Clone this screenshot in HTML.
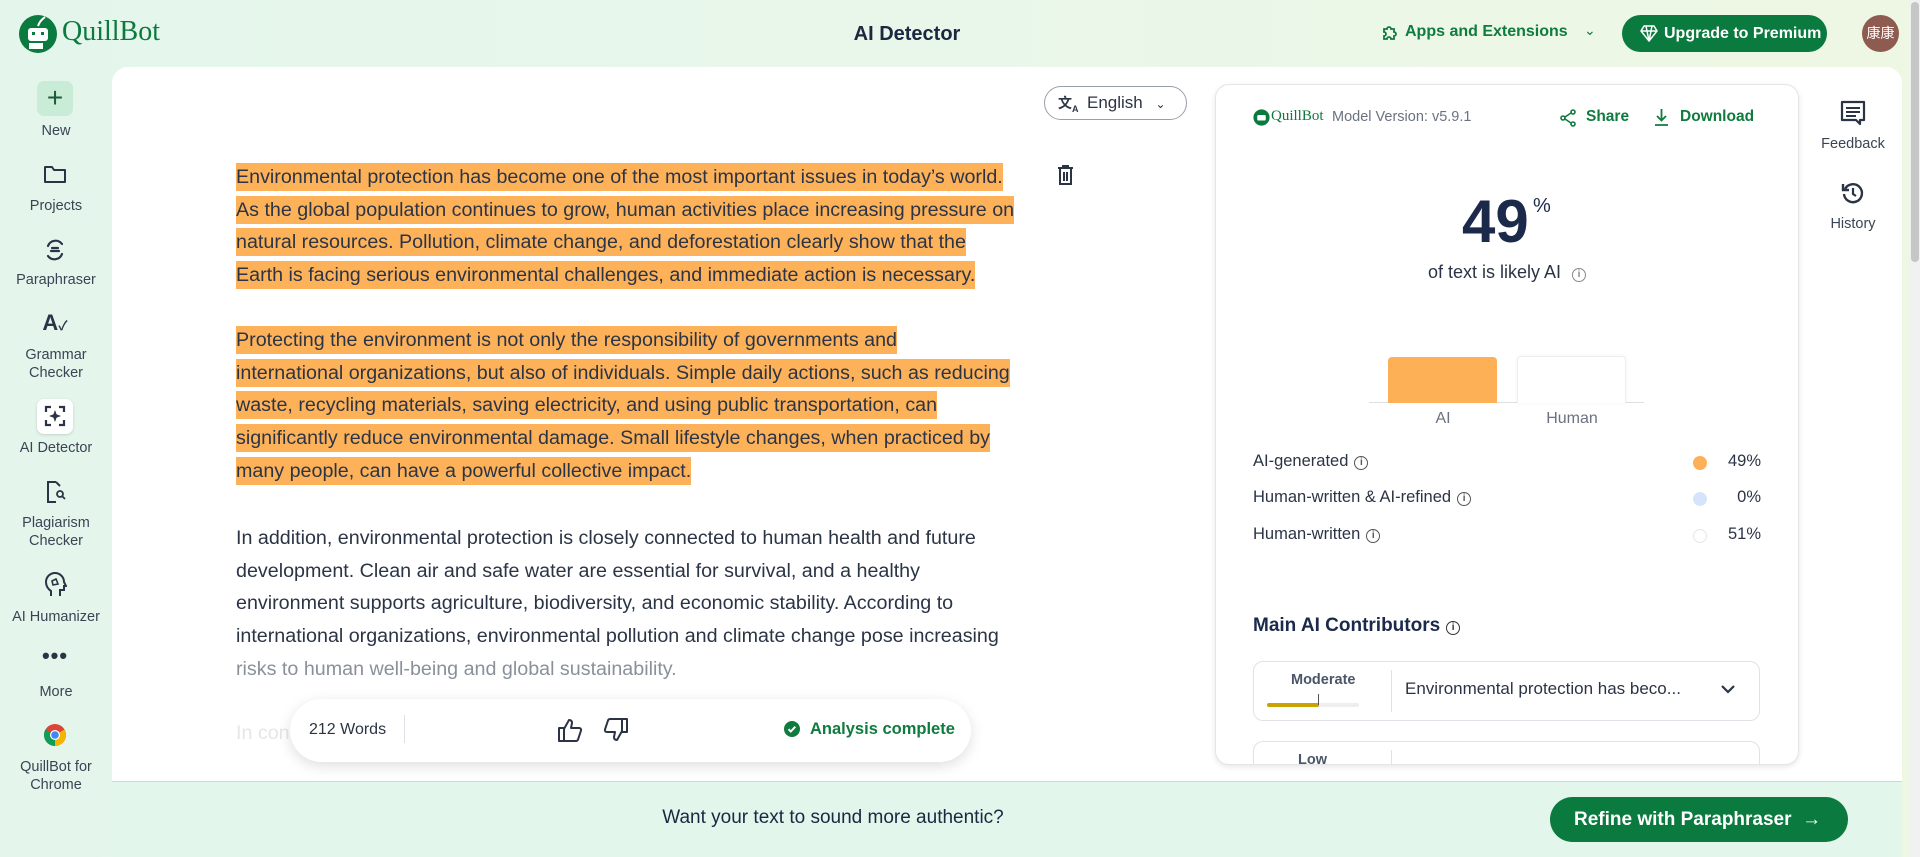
<!DOCTYPE html>
<html><head><meta charset="utf-8"><style>
*{box-sizing:border-box;margin:0;padding:0}
body{width:1920px;height:857px;overflow:hidden;font-family:"Liberation Sans","Noto Sans CJK SC",sans-serif;background:linear-gradient(90deg,#e4f6ec 0%,#e9f7ea 50%,#eef7e3 100%);position:relative;color:#2b3445}
.a{position:absolute}
.side{position:absolute;left:0;width:112px;text-align:center;font-size:14.5px;color:#3b4454;line-height:18px}
.ic{position:absolute;left:55px;transform:translate(-50%,-50%)}
.txt{position:absolute;left:236px;font-size:19.7px;color:#2b3445;white-space:nowrap}
.txt div{height:32.7px;line-height:32.7px}
.hl span{background:#fdb25a;padding:3px 0}
.g{color:#0f7b3f;font-weight:bold}
.row{position:absolute;left:1253px;font-size:16.5px;color:#2b3445}
.info{display:inline-block;width:14px;height:14px;border:1.4px solid #555;border-radius:50%;font-size:10px;line-height:11px;text-align:center;vertical-align:1px;margin-left:6px;font-weight:bold;color:#555}
</style></head><body>
<!-- header -->
<svg class="a" style="left:18px;top:14px" width="40" height="40" viewBox="0 0 40 40"><circle cx="20" cy="20" r="19" fill="#0a7a3e"/><rect x="10" y="14" width="20" height="13" rx="3" fill="#fff"/><rect x="14" y="18" width="3" height="3" fill="#0a7a3e"/><rect x="23" y="18" width="3" height="3" fill="#0a7a3e"/><rect x="11" y="29" width="14" height="6" fill="#fff"/><path d="M20 12 C22 6 26 4 27 3" stroke="#fff" stroke-width="2" fill="none"/></svg>
<div class="a" style="left:62px;top:16px;font-family:'Liberation Serif',serif;font-size:28px;color:#0a7a3e">QuillBot</div>
<div class="a" style="left:907px;top:23px;transform:translateX(-50%);font-size:20px;font-weight:bold;color:#1c2740">AI Detector</div>
<svg class="a" style="left:1380px;top:23px" width="18" height="20" viewBox="0 0 18 20"><path d="M4 6h3a2 2 0 1 1 4 0h3v3a2 2 0 1 1 0 4v3h-3a2 2 0 1 0-4 0H4v-3a2 2 0 1 0 0-4z" fill="none" stroke="#0f7b3f" stroke-width="1.8"/></svg>
<div class="a g" style="left:1405px;top:23px;font-size:16px;white-space:nowrap">Apps and Extensions</div>
<div class="a" style="left:1584px;top:22px;color:#0f7b3f;font-size:14px">&#8964;</div>
<div class="a" style="left:1622px;top:15px;width:205px;height:37px;border-radius:19px;background:#0a7a3e;color:#fff;font-weight:bold;font-size:16px;line-height:37px;padding-left:42px;white-space:nowrap">Upgrade to Premium</div>
<svg class="a" style="left:1640px;top:24px" width="18" height="18" viewBox="0 0 18 18"><path d="M4 2h10l3 5-8 10L1 7z M1 7h16 M6 2l3 15 3-15" fill="none" stroke="#fff" stroke-width="1.5"/></svg>
<div class="a" style="left:1862px;top:15px;width:37px;height:37px;border-radius:50%;background:#8e5b50;color:#fff;font-size:14px;line-height:37px;text-align:center;font-family:'Noto Sans CJK SC',sans-serif">康康</div>
<div class="a" style="left:1910px;top:0;width:10px;height:857px;background:#f1f1f1"></div>
<div class="a" style="left:1911px;top:2px;width:8px;height:260px;background:#c6c6c6;border-radius:4px"></div>

<!-- sidebar -->
<div class="a" style="left:37px;top:81px;width:36px;height:35px;border-radius:7px;background:#c9ecd7"></div>
<div class="ic" style="top:98px;font-size:28px;color:#1d5a3a;line-height:1">+</div>
<div class="side" style="top:122px">New</div>
<svg class="ic" style="top:174px" width="24" height="20" viewBox="0 0 24 20"><path d="M2 3h7l2 3h11v12H2z" fill="none" stroke="#2b3445" stroke-width="2" stroke-linejoin="round"/></svg>
<div class="side" style="top:197px">Projects</div>
<svg class="ic" style="top:250px" width="24" height="24" viewBox="0 0 24 24"><path d="M5 8a8 8 0 0 1 14-2M19 16a8 8 0 0 1-14 2M9 10h6M8 13h8" fill="none" stroke="#2b3445" stroke-width="2.2" stroke-linecap="round"/></svg>
<div class="side" style="top:271px">Paraphraser</div>
<div class="ic" style="top:323px;font-size:22px;font-weight:bold;color:#2b3445">A<span style="font-size:13px">&#10003;</span></div>
<div class="side" style="top:346px">Grammar<br>Checker</div>
<div class="a" style="left:37px;top:399px;width:36px;height:35px;border-radius:7px;background:#fff;box-shadow:0 1px 3px rgba(0,0,0,.15)"></div>
<svg class="ic" style="top:416px" width="22" height="22" viewBox="0 0 22 22"><path d="M2 7V2h5M15 2h5v5M20 15v5h-5M7 20H2v-5" fill="none" stroke="#2b3445" stroke-width="2.2"/><path d="M11 5l1.6 4.4L17 11l-4.4 1.6L11 17l-1.6-4.4L5 11l4.4-1.6z" fill="#2b3445"/></svg>
<div class="side" style="top:439px">AI Detector</div>
<svg class="ic" style="top:492px" width="22" height="24" viewBox="0 0 22 24"><path d="M12 2H4v20h8M12 2l4 4" fill="none" stroke="#2b3445" stroke-width="2"/><circle cx="16" cy="14" r="3" fill="none" stroke="#2b3445" stroke-width="1.8"/><path d="M18 16l3 3" stroke="#2b3445" stroke-width="1.8"/></svg>
<div class="side" style="top:514px">Plagiarism<br>Checker</div>
<svg class="ic" style="top:585px" width="24" height="26" viewBox="0 0 24 26"><path d="M8 24v-5c-3-2-5-5-5-9a9 9 0 0 1 18 0l2 4h-2v4h-4v6" fill="none" stroke="#2b3445" stroke-width="2"/><path d="M9 9l4-2 2 5-5 1z" fill="none" stroke="#2b3445" stroke-width="1.6"/></svg>
<div class="side" style="top:608px">AI Humanizer</div>
<div class="ic" style="top:656px;font-size:22px;font-weight:bold;color:#2b3445;letter-spacing:1px">•••</div>
<div class="side" style="top:683px">More</div>
<svg class="ic" style="top:735px" width="24" height="24" viewBox="0 0 24 24"><circle cx="12" cy="12" r="11" fill="#db4437"/><path d="M12 12 L2.5 6.5 A11 11 0 0 0 12 23z" fill="#0f9d58"/><path d="M12 12 L21.5 6.5 A11 11 0 0 1 12 23z" fill="#f4b400"/><circle cx="12" cy="12" r="5" fill="#fff"/><circle cx="12" cy="12" r="3.8" fill="#4285f4"/></svg>
<div class="side" style="top:758px">QuillBot for<br>Chrome</div>

<!-- main card -->
<div class="a" style="left:112px;top:67px;width:1790px;height:790px;background:#fff;border-radius:16px 16px 0 0"></div>
<div class="a" style="left:112px;top:781px;width:1790px;height:76px;background:#e3f6ec;border-top:1px solid #cfd8d4"></div>
<div class="a" style="left:833px;top:807px;transform:translateX(-50%);font-size:19px;color:#1c2740;white-space:nowrap">Want your text to sound more authentic?</div>
<div class="a" style="left:1550px;top:797px;width:298px;height:45px;border-radius:23px;background:#0a7a3e;color:#fff;font-weight:bold;font-size:19px;line-height:45px;padding-left:24px;white-space:nowrap">Refine with Paraphraser &nbsp;&#8594;</div>

<div class="a" style="left:1044px;top:86px;width:143px;height:34px;border:1px solid #9aa0a8;border-radius:17px;font-size:17px;line-height:32px;padding-left:42px;color:#2b3445">English <span style="font-size:12px;margin-left:8px">&#8964;</span></div>
<div class="a" style="left:1058px;top:93px;font-size:14px;font-weight:bold;color:#2b3445">文<sub style="font-size:9px">A</sub></div>
<svg class="a" style="left:1057px;top:165px" width="17" height="20" viewBox="0 0 17 20"><path d="M1 3h15M6 3V1h5v2M3 3v16h11V3M7 7v9M10 7v9" fill="none" stroke="#2b3445" stroke-width="2"/></svg>

<div class="txt hl" style="top:161px">
<div><span>Environmental protection has become one of the most important issues in today’s world. </span></div>
<div><span>As the global population continues to grow, human activities place increasing pressure on </span></div>
<div><span>natural resources. Pollution, climate change, and deforestation clearly show that the </span></div>
<div><span>Earth is facing serious environmental challenges, and immediate action is necessary.</span></div>
</div>
<div class="txt hl" style="top:324px">
<div><span>Protecting the environment is not only the responsibility of governments and </span></div>
<div><span>international organizations, but also of individuals. Simple daily actions, such as reducing </span></div>
<div><span>waste, recycling materials, saving electricity, and using public transportation, can </span></div>
<div><span>significantly reduce environmental damage. Small lifestyle changes, when practiced by </span></div>
<div><span>many people, can have a powerful collective impact.</span></div>
</div>
<div class="txt" style="top:522px">
<div>In addition, environmental protection is closely connected to human health and future</div>
<div>development. Clean air and safe water are essential for survival, and a healthy</div>
<div>environment supports agriculture, biodiversity, and economic stability. According to</div>
<div>international organizations, environmental pollution and climate change pose increasing</div>
<div style="color:#8a909a">risks to human well-being and global sustainability.</div>
</div>
<div class="txt" style="top:717px;color:#e4e6ea"><div>In conclusion</div></div>

<!-- pill -->
<div class="a" style="left:290px;top:699px;width:681px;height:63px;border-radius:32px;background:#fff;box-shadow:0 4px 14px rgba(0,0,0,.13)"></div>
<div class="a" style="left:309px;top:721px;font-size:16px;color:#2b3445">212 Words</div>
<div class="a" style="left:404px;top:715px;width:1px;height:28px;background:#dde0e4"></div>
<svg class="a" style="left:557px;top:717px" width="26" height="26" viewBox="0 0 26 26"><path d="M2 11h5v13H2zM7 12l5-9c2 0 3 1 3 3l-1 5h8c1.5 0 2.5 1.2 2 2.6l-3 9c-.4 1-1.2 1.4-2.2 1.4H7" fill="none" stroke="#2b3445" stroke-width="2" stroke-linejoin="round"/></svg>
<svg class="a" style="left:603px;top:717px" width="26" height="26" viewBox="0 0 26 26"><path d="M24 15h-5V2h5zM19 14l-5 9c-2 0-3-1-3-3l1-5H4c-1.5 0-2.5-1.2-2-2.6l3-9C5.4 2.4 6.2 2 7.2 2H19" fill="none" stroke="#2b3445" stroke-width="2" stroke-linejoin="round"/></svg>
<svg class="a" style="left:784px;top:721px" width="16" height="16" viewBox="0 0 16 16"><circle cx="8" cy="8" r="8" fill="#0f7b3f"/><path d="M4.5 8.2l2.3 2.3 4.5-4.8" stroke="#fff" stroke-width="2" fill="none"/></svg>
<div class="a g" style="left:810px;top:720px;font-size:16.5px">Analysis complete</div>

<!-- right card -->
<div class="a" style="left:1215px;top:84px;width:584px;height:681px;background:#fff;border:1px solid #e3e5e8;border-radius:14px;box-shadow:0 2px 6px rgba(0,0,0,.1);overflow:hidden">
 <svg class="a" style="left:37px;top:24px" width="17" height="17" viewBox="0 0 40 40"><circle cx="20" cy="20" r="19" fill="#0a7a3e"/><rect x="10" y="14" width="20" height="13" rx="3" fill="#fff"/></svg>
 <div class="a" style="left:55px;top:23px;font-family:'Liberation Serif',serif;font-size:15px;color:#0a7a3e">QuillBot</div>
 <div class="a" style="left:116px;top:24px;font-size:14.5px;color:#6b7280">Model Version: v5.9.1</div>
 <svg class="a" style="left:344px;top:24px" width="17" height="18" viewBox="0 0 17 18"><circle cx="13" cy="3" r="2" fill="none" stroke="#0f7b3f" stroke-width="1.6"/><circle cx="3" cy="9" r="2" fill="none" stroke="#0f7b3f" stroke-width="1.6"/><circle cx="13" cy="15" r="2" fill="none" stroke="#0f7b3f" stroke-width="1.6"/><path d="M5 8l6-4M5 10l6 4" stroke="#0f7b3f" stroke-width="1.6"/></svg>
 <div class="a g" style="left:370px;top:23px;font-size:15.5px">Share</div>
 <svg class="a" style="left:438px;top:23px" width="15" height="19" viewBox="0 0 15 19"><path d="M7.5 1v11M3 8l4.5 4.5L12 8M1 17h13" fill="none" stroke="#0f7b3f" stroke-width="1.8"/></svg>
 <div class="a g" style="left:464px;top:23px;font-size:15.5px">Download</div>
 <div class="a" style="left:246px;top:107px;font-size:60px;font-weight:bold;color:#1b2a4a;line-height:1">49</div>
 <div class="a" style="left:317px;top:110px;font-size:20px;color:#1b2a4a">%</div>
 <div class="a" style="left:291px;top:177px;transform:translateX(-50%);font-size:18px;color:#2b3445;white-space:nowrap">of text is likely AI <span class="info" style="border-color:#888;color:#888">i</span></div>
 <div class="a" style="left:153px;top:317px;width:275px;height:1px;background:#dcdfe3"></div>
 <div class="a" style="left:172px;top:272px;width:109px;height:46px;background:#fdb056;border-radius:4px 4px 0 0"></div>
 <div class="a" style="left:301px;top:271px;width:109px;height:47px;background:#fff;border:1px solid #eceef0;border-bottom:none;border-radius:4px 4px 0 0;box-shadow:0 0 4px rgba(0,0,0,.06)"></div>
 <div class="a" style="left:227px;top:325px;transform:translateX(-50%);font-size:16px;color:#6b7280">AI</div>
 <div class="a" style="left:356px;top:325px;transform:translateX(-50%);font-size:16px;color:#6b7280">Human</div>
</div>
<div class="row" style="top:452px">AI-generated<span class="info">i</span></div>
<div class="row" style="top:488px">Human-written &amp; AI-refined<span class="info">i</span></div>
<div class="row" style="top:525px">Human-written<span class="info">i</span></div>
<div class="a" style="left:1693px;top:456px;width:14px;height:14px;border-radius:50%;background:#fdb056"></div>
<div class="a" style="left:1693px;top:492px;width:14px;height:14px;border-radius:50%;background:#d6e4fb"></div>
<div class="a" style="left:1693px;top:529px;width:14px;height:14px;border-radius:50%;border:1px solid #e3e5e8"></div>
<div class="a" style="left:1700px;top:452px;width:61px;text-align:right;font-size:16.5px;color:#2b3445">49%</div>
<div class="a" style="left:1700px;top:488px;width:61px;text-align:right;font-size:16.5px;color:#2b3445">0%</div>
<div class="a" style="left:1700px;top:525px;width:61px;text-align:right;font-size:16.5px;color:#2b3445">51%</div>
<div class="a" style="left:1253px;top:615px;font-size:19px;font-weight:bold;color:#1b2a4a">Main AI Contributors<span class="info" style="border-color:#333;color:#333">i</span></div>
<div class="a" style="left:1253px;top:661px;width:507px;height:60px;border:1px solid #dfe2e6;border-radius:10px"></div>
<div class="a" style="left:1291px;top:672px;font-size:14.5px;font-weight:bold;color:#4a5568">Moderate</div>
<div class="a" style="left:1267px;top:703px;width:92px;height:4px;background:#eeeeee;border-radius:2px"></div>
<div class="a" style="left:1267px;top:703px;width:52px;height:4px;background:#c9a400;border-radius:2px"></div>
<div class="a" style="left:1318px;top:694px;width:1px;height:11px;background:#555"></div>
<div class="a" style="left:1391px;top:670px;width:1px;height:42px;background:#dfe2e6"></div>
<div class="a" style="left:1405px;top:679px;font-size:17px;color:#2b3445">Environmental protection has beco...</div>
<svg class="a" style="left:1720px;top:683px" width="16" height="12" viewBox="0 0 16 12"><path d="M2 3l6 6 6-6" fill="none" stroke="#2b3445" stroke-width="2.2"/></svg>
<div class="a" style="left:1253px;top:741px;width:507px;height:23px;border:1px solid #dfe2e6;border-bottom:none;border-radius:10px 10px 0 0;overflow:hidden"><div style="position:absolute;left:44px;top:10px;font-size:14.5px;font-weight:bold;color:#4a5568">Low</div><div style="position:absolute;left:137px;top:8px;width:1px;height:20px;background:#dfe2e6"></div></div>

<!-- right rail -->
<svg class="a" style="left:1840px;top:100px" width="26" height="26" viewBox="0 0 26 26"><path d="M2 2h22v18h-4v4l-4-4H2z" fill="none" stroke="#2b3445" stroke-width="2.2" stroke-linejoin="round"/><path d="M6 8h14M6 12h14M6 16h10" stroke="#2b3445" stroke-width="2"/></svg>
<div class="a" style="left:1853px;top:136px;transform:translateX(-50%);font-size:14.5px;color:#3b4454">Feedback</div>
<svg class="a" style="left:1841px;top:181px" width="24" height="24" viewBox="0 0 24 24"><path d="M4 8a9 9 0 1 1-1 5" fill="none" stroke="#2b3445" stroke-width="2.4"/><path d="M2 3v6h6" fill="none" stroke="#2b3445" stroke-width="2.4"/><path d="M12 7v6l3 2" fill="none" stroke="#2b3445" stroke-width="2.2"/></svg>
<div class="a" style="left:1853px;top:216px;transform:translateX(-50%);font-size:14.5px;color:#3b4454">History</div>
</body></html>
